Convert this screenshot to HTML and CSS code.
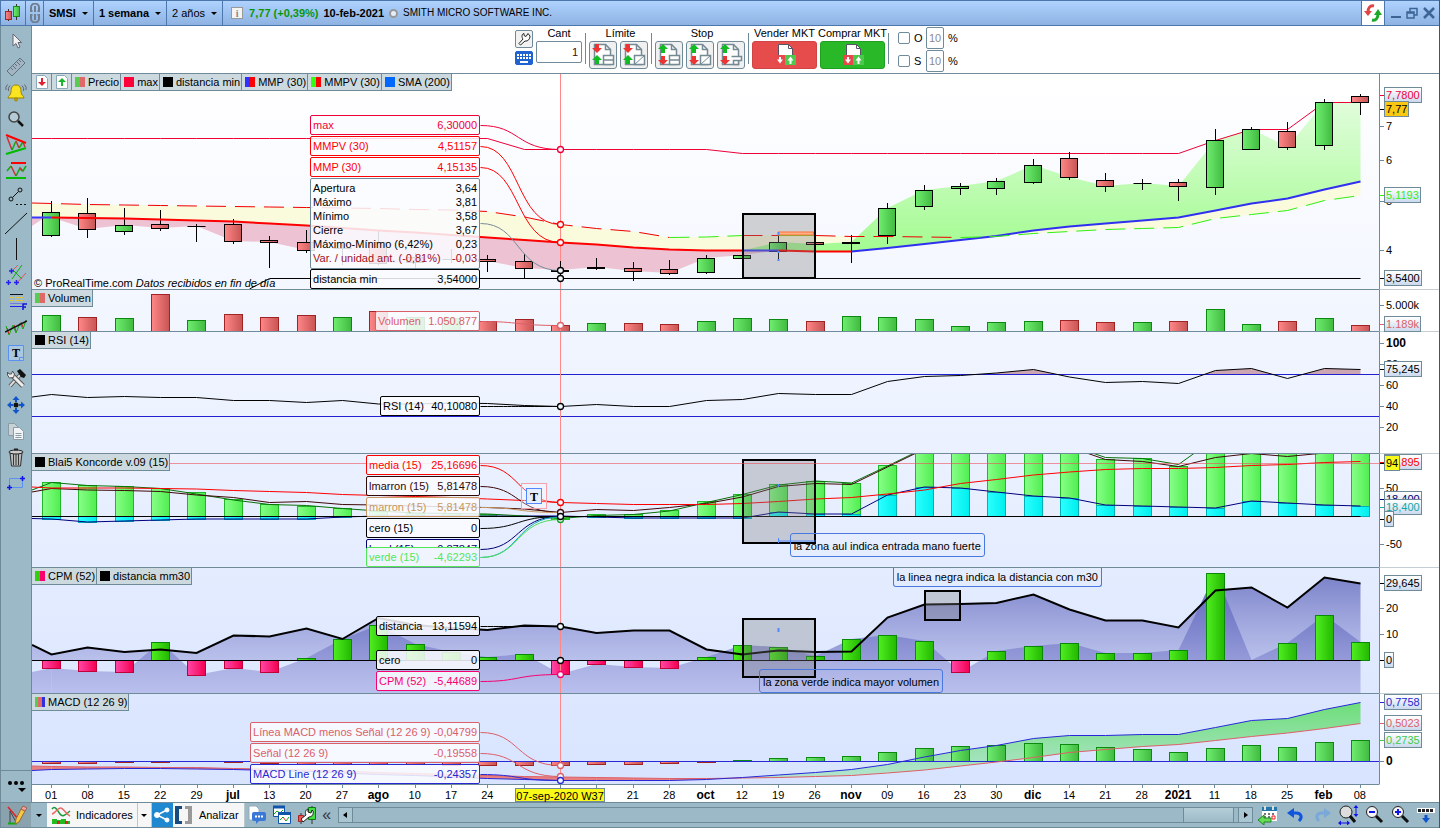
FILE: index.html
```
<!DOCTYPE html>
<html lang="es">

<head>
	<meta charset="utf-8">
	<title>SMSI - SMITH MICRO SOFTWARE INC.</title>
	<meta name="viewport" content="width=device-width,initial-scale=1.0">
	<link rel="stylesheet" href="styles.css">
	<script defer src="chart.js"></script>
</head>

<body>
	<svg class="defs" aria-hidden="true">
		<linearGradient id="up"><stop stop-color="#70ee70"/><stop offset="1" stop-color="#40ba40"/></linearGradient>
		<linearGradient id="down"><stop stop-color="#ff8787"/><stop offset="1" stop-color="#c85454"/></linearGradient>
		<linearGradient id="lime"><stop stop-color="#88ff88"/><stop offset="1" stop-color="#50ee50"/></linearGradient>
		<linearGradient id="cyan"><stop stop-color="#2cffff"/><stop offset="1" stop-color="#00eeee"/></linearGradient>
		<linearGradient id="cpmUp"><stop stop-color="#50ee20"/><stop offset="1" stop-color="#22b800"/></linearGradient>
		<linearGradient id="cpmDown"><stop stop-color="#ff48a8"/><stop offset="1" stop-color="#f40050"/></linearGradient>
		<linearGradient id="bull" gradientUnits="userSpaceOnUse" x1="0" x2="0" y1="20" y2="180"><stop stop-color="#e4fde0"/><stop offset="1" stop-color="#a2fb90"/></linearGradient>
		<linearGradient id="area" gradientUnits="userSpaceOnUse" x1="0" x2="0" y1="0" y2="125"><stop stop-color="#3c42a8" stop-opacity=".85"/><stop offset=".73" stop-color="#6c72c4" stop-opacity=".55"/><stop offset=".74" stop-color="#8084cc" stop-opacity=".58"/><stop offset="1" stop-color="#9498dc" stop-opacity=".5"/></linearGradient>
		<linearGradient id="dist" gradientUnits="userSpaceOnUse" x1="0" x2="0" y1="5" y2="92"><stop stop-color="#6068bc" stop-opacity=".82"/><stop offset="1" stop-color="#8488d0" stop-opacity=".42"/></linearGradient>
		<linearGradient id="macdUp" gradientUnits="userSpaceOnUse" x1="0" x2="0" y1="0" y2="80"><stop stop-color="#66dd70"/><stop offset="1" stop-color="#b0e4cc"/></linearGradient>
		<symbol id="page" viewBox="0 0 24 24"><path d="M3.5 1.5h11l5 5v15h-16z" fill="#fff" stroke="#758a94" stroke-width="1.5"/><path d="M14.5 1.5v5h5" fill="none" stroke="#758a94" stroke-width="1.5"/></symbol>
		<symbol id="limit" viewBox="0 0 24 24"><path d="M6 1v4" stroke="#e33" stroke-width="4"/><path d="M1 5h10l-5 5z" fill="#e33"/><path d="M6 17v4" stroke="#1b2" stroke-width="4"/><path d="M1 17h10l-5-5z" fill="#1b2"/></symbol>
		<symbol id="stop" viewBox="0 0 24 24"><path d="M6 6v4" stroke="#1b2" stroke-width="4"/><path d="M1 6h10L6 1z" fill="#1b2"/><path d="M6 13v4" stroke="#e33" stroke-width="4"/><path d="M1 17h10l-5 5z" fill="#e33"/></symbol>
		<symbol id="deal" viewBox="0 0 24 24"><path d="M5.5 12V1.5h10l4 4V12" fill="#fff" stroke="#556"/><path d="M15.5 1.5v4h4" fill="none" stroke="#556"/><path d="M2 12h10v10H2z" fill="#e8484c"/><path d="M12 12h11v10H12z" fill="#4cc84c"/><path d="M7 14v3M17.500 17v4" stroke="#fff" stroke-width="2"/><path d="M4 16.500h6L7 20.500zM14.500 17.500h6l-3-4z" fill="#fff"/></symbol>
	</svg>

	<header class="titlebar">
		<div class="cell logo"><svg width="18" height="18" viewBox="0 0 18 18"><path d="M4.500 5v12M12.500 0v16" stroke="#333"/><rect x="1.500" y="7.500" width="6" height="8" fill="url(#down)" stroke="#a22"/><rect x="9.500" y="2.500" width="6" height="10" fill="url(#up)" stroke="#1a8a1a"/></svg></div>
		<div class="cell link"><svg width="12" height="20" viewBox="0 0 12 20" fill="none" stroke="#6f7f90" stroke-width="2"><path d="M3.500 8H2V4.500a4 4 0 0 1 8 0V8H8.500M6 3v6M3.500 12H2v3.500a4 4 0 0 0 8 0V12H8.500M6 11v6"/></svg></div>
		<button class="cell pick bold">SMSI</button>
		<button class="cell pick bold">1 semana</button>
		<button class="cell pick">2 años</button>
		<div class="quote">
			<button class="info" aria-label="Información">i</button>
			<b class="change">7,77 (+0,39%)</b>
			<b>10-feb-2021</b>
			<i class="dot"></i>
			<span class="company">SMITH MICRO SOFTWARE INC.</span>
		</div>
		<div class="cell sync"><svg width="18" height="18" viewBox="0 0 18 18" fill="none" stroke-width="3"><path d="M10 2C6 1 4 4 4 8" stroke="#e04545"/><path d="M0 7h8l-4 5z" fill="#e04545"/><path d="M8 16c4 1 6-2 6-6" stroke="#1ea82a"/><path d="M10 11h8l-4-6z" fill="#1ea82a"/></svg></div>
		<div class="window">
			<button aria-label="Minimizar"><svg width="12" height="12" viewBox="0 0 12 12"><path d="M1 10h10" stroke="#3c6596" stroke-width="2"/></svg></button>
			<button aria-label="Restaurar"><svg width="12" height="12" viewBox="0 0 12 12" fill="none" stroke="#3c6596" stroke-width="1.500"><path d="M1 5h7v6H1zM1 6h7M4 5V1.500h7V8H8"/></svg></button>
			<button aria-label="Cerrar"><svg width="12" height="12" viewBox="0 0 12 12"><path d="M1 1l10 10M11 1L1 11" stroke="#3c6596" stroke-width="2.500"/></svg></button>
		</div>
	</header>

	<div class="main">
		<nav class="tools">
			<button aria-label="Cursor"><svg viewBox="0 0 22 22"><path d="M8 4v12l3-2.500 2 4.500 2-1-2-4.500h3.500z" fill="#f2f2f2" stroke="#667"/></svg></button>
			<button aria-label="Regla"><svg viewBox="0 0 22 22"><path d="M2 15L15 2l5 5L7 20z" fill="#a3b4c2" stroke="#5f7280"/><path d="M6 12l2 2M8 10l3 3M10 8l2 2M12 6l3 3M14 4l2 2" stroke="#5f7280"/></svg></button>
			<button aria-label="Alerta"><svg viewBox="0 0 22 22"><path d="M11 3c4 0 5 3 5 7 0 3 3 4 3 6H3c0-2 3-3 3-6 0-4 1-7 5-7z" fill="#fbe320" stroke="#9a8200"/><circle cx="11" cy="17.500" r="1.500" fill="#ca0" stroke="#9a8200"/><path d="M5 3.500Q2.500 6 3.500 9M2.500 2.500Q0 5 1 8M17 3.500Q19.500 6 18.500 9M19.500 2.500Q22 5 21 8" stroke="#667" fill="none"/></svg></button>
			<button aria-label="Lupa"><svg viewBox="0 0 22 22"><circle cx="9" cy="9" r="5" fill="#b4cad4" stroke="#444" stroke-width="1.500"/><path d="M13 13l5 5" stroke="#111" stroke-width="2.500"/></svg></button>
			<button aria-label="Triángulos"><svg viewBox="0 0 22 22" fill="none"><path d="M2 3l5 13M11 7l3 7M18 8l2 5" stroke="#c33" stroke-width="1.500"/><path d="M7 16l4-9M14 14l4-6" stroke="#1a1" stroke-width="1.500"/><path d="M1 1l20 8" stroke="#f00" stroke-width="2"/><path d="M1 20l20-6" stroke="#0b0" stroke-width="2"/></svg></button>
			<button aria-label="Canales"><svg viewBox="0 0 22 22" fill="none"><path d="M2 11l4-5M11 16l4-8 3 3 3-5" stroke="#1a1" stroke-width="1.500"/><path d="M6 6l5 10M15 8l2 3" stroke="#c33" stroke-width="1.500"/><path d="M6 3h15" stroke="#f00" stroke-width="2"/><path d="M1 18h20" stroke="#0b0" stroke-width="2"/></svg></button>
			<button aria-label="Segmento"><svg viewBox="0 0 22 22" fill="none" stroke="#111"><circle cx="15" cy="4" r="2"/><circle cx="6" cy="13" r="2"/><path d="M7.500 11.500l6-6"/><path d="M11 18.500h10" stroke-dasharray="2 2"/></svg></button>
			<button aria-label="Línea"><svg viewBox="0 0 22 22"><path d="M0 22L22 1" stroke="#111"/></svg></button>
			<button aria-label="Vertical"><svg viewBox="0 0 22 22"><path d="M11.500 0v22" stroke="#111"/></svg></button>
			<button aria-label="Paralelas"><svg viewBox="0 0 22 22" fill="none"><path d="M7 7l6-6M11 20L21 9" stroke="#d55"/><path d="M7 15L17 1M8 6l9 9" stroke="#1a1"/><path d="M1 18.500h5M3.500 16v5M9 18.500h5M11.500 16v5M4 7h5M6.500 4.500v5" stroke="#22e" stroke-width="1.500"/></svg></button>
			<button aria-label="Fibonacci"><svg viewBox="0 0 22 22" fill="none"><path d="M5 4.500h13" stroke="#111"/><path d="M5 7.500h13M5 10.500h13" stroke="#e8c530" stroke-dasharray="4 1"/><path d="M5 13.500h12" stroke="#77d"/><path d="M5 16.500h12" stroke="#22e"/><path d="M18 20v-6h4M18 17h3" stroke="#11d" stroke-width="1.500"/></svg></button>
			<button aria-label="Regresión"><svg viewBox="0 0 22 22" fill="none"><path d="M1 10l3 9 4-10 3 8 4-10 3 6 3-9" stroke="#1a1"/><path d="M2 12l2 6M9 9l2 6M16 6l2 5" stroke="#d22"/><path d="M0 16L22 5" stroke="#111" stroke-width="1.500"/></svg></button>
			<button aria-label="Texto"><svg viewBox="0 0 22 22"><path d="M3.500 3.500h15v15h-15z" fill="#a9c8e0" stroke="#5b90f0"/><path d="M14.500 18.500v-3h4" fill="none" stroke="#5b90f0"/><text class="glyph" x="11" y="15">T</text></svg></button>
			<button aria-label="Herramientas"><svg viewBox="0 0 22 22"><path d="M5 18L15 7" stroke="#555" stroke-width="4"/><path d="M5 18L15 7" stroke="#ddd" stroke-width="2"/><path d="M12 3l3-2 6 6-2 3-3-1z" fill="#111"/><path d="M6 6l12 12" stroke="#555" stroke-width="5"/><path d="M6 6l12 12" stroke="#eee" stroke-width="3"/><path d="M2.500 4v3l2 3 4-.5 1-3.500-2-3-1 3H4z" fill="#eee" stroke="#555"/></svg></button>
			<button aria-label="Mover"><svg viewBox="0 0 22 22"><path d="M11 4v4M11 14v4M4 11h4M14 11h4" stroke="#15c" stroke-width="2"/><path d="M11 2l3.500 4h-7zM11 20l3.500-4h-7zM2 11l4-3.500v7zM20 11l-4-3.500v7z" fill="#15c"/><circle cx="11" cy="11" r="2.500" fill="#111"/></svg></button>
			<button aria-label="Copiar"><svg viewBox="0 0 22 22" stroke="#8c9ba4"><path d="M3.500 3.500h6l4 4v8h-10z" fill="#c5d2d8"/><path d="M8.500 7.500h6l4 4v8h-10z" fill="#f2f5f7"/><path d="M10.500 13.500h6M10.500 15.500h6M10.500 17.500h6"/></svg></button>
			<button aria-label="Borrar"><svg viewBox="0 0 22 22"><path d="M5 7h12l-1.500 13h-9z" fill="#bbb" stroke="#333"/><path d="M8.500 8v11M11 8v11M13.500 8v11" stroke="#333"/><ellipse cx="11" cy="6" rx="7" ry="2" fill="#ccc" stroke="#222"/><path d="M9 3.500h4" stroke="#222" stroke-width="2"/></svg></button>
			<button aria-label="Zona"><svg viewBox="0 0 22 22" fill="none"><path d="M4.500 6.500h13v9h-13z" stroke="#5b90f0"/><path d="M15 6.500h5M17.500 4v5M2 15.500h5M4.500 13v5" stroke="#11e" stroke-width="1.500"/></svg></button>
			<button class="more" aria-label="Más"><svg viewBox="0 0 22 22"><circle cx="5" cy="7" r="2"/><circle cx="11" cy="7" r="2"/><circle cx="17" cy="7" r="2"/><path d="M13 12h8l-4 4z"/></svg></button>
		</nav>

		<div class="desk">
			<form class="orders" onsubmit="return false">
				<div class="stack">
					<button class="mini" aria-label="Ajustes"><svg width="16" height="16" viewBox="0 0 16 16"><path d="M12 2.500l-2 3-2-1v-2C5.500 3 5.500 6 7 8l-4 4.500 1.500 1.500L9 10c3 .5 5-2 5-5z" fill="#fff" stroke="#222"/></svg></button>
					<button class="mini keys" aria-label="Teclado"><svg width="16" height="12" viewBox="0 0 16 12" stroke="#fff" stroke-width="2"><path d="M1 3h14M1 6h14" stroke-dasharray="2 1"/><path d="M4 10h8"/></svg></button>
				</div>
				<div class="field"><label for="qty">Cant</label><input id="qty" class="qty" value="1"></div>
				<fieldset class="group">
					<legend>Límite</legend>
					<button class="order" aria-label="Límite fijo"><svg viewBox="0 0 24 24"><use href="#page"/><use href="#limit"/><path d="M12.500 12.500h10v9h-10zM12 17h11" fill="#fff" stroke="#758a94" stroke-width="1.500"/></svg></button>
					<button class="order" aria-label="Límite oblicuo"><svg viewBox="0 0 24 24"><use href="#page"/><use href="#limit"/><path d="M12.500 12.500h10v9h-10z" fill="#fff" stroke="#758a94" stroke-width="1.500"/><path d="M12.500 21.500l10-9" stroke="#758a94"/></svg></button>
				</fieldset>
				<fieldset class="group">
					<legend>Stop</legend>
					<button class="order" aria-label="Stop fijo"><svg viewBox="0 0 24 24"><use href="#page"/><use href="#stop"/><path d="M12.500 12.500h10v9h-10zM12 17h11" fill="#fff" stroke="#758a94" stroke-width="1.500"/></svg></button>
					<button class="order" aria-label="Stop oblicuo"><svg viewBox="0 0 24 24"><use href="#page"/><use href="#stop"/><path d="M12.500 12.500h10v9h-10z" fill="#fff" stroke="#758a94" stroke-width="1.500"/><path d="M12.500 21.500l10-9" stroke="#758a94"/></svg></button>
					<button class="order" aria-label="Stop dinámico"><svg viewBox="0 0 24 24"><use href="#page"/><use href="#stop"/><path d="M12.500 13.500h10v4h-3v4h-5v-4h5" fill="#fff" stroke="#758a94" stroke-width="1.500"/></svg></button>
				</fieldset>
				<div class="deals">
					<div class="field"><label for="sell">Vender MKT</label><button id="sell" class="deal sell"><svg width="24" height="24"><use href="#deal"/></svg></button></div>
					<div class="field"><label for="buy">Comprar MKT</label><button id="buy" class="deal buy"><svg width="24" height="24"><use href="#deal"/></svg></button></div>
				</div>
				<div class="limits">
					<div><input type="checkbox" id="obj"><label for="obj">O</label><input class="pct" value="10" aria-label="Objetivo"><span>%</span></div>
					<div><input type="checkbox" id="stp"><label for="stp">S</label><input class="pct" value="10" aria-label="Stop"><span>%</span></div>
				</div>
			</form>

			<div class="panes">
				<section class="pane price">
					<div class="plot">
						<p class="credit">© ProRealTime.com <i>Datos recibidos en fin de día</i></p>
						<svg id="price"></svg>
						<ul class="legend">
							<li class="arrow"><svg width="14" height="14" viewBox="0 0 14 14"><path d="M1.500.5h8l3 3v10h-11z" fill="#fff" stroke="#8aaabb"/><path d="M6 3h2v4h3l-4 4-4-4h3z" fill="#e02030"/></svg></li>
							<li class="arrow"><svg width="14" height="14" viewBox="0 0 14 14"><path d="M1.500.5h8l3 3v10h-11z" fill="#fff" stroke="#8aaabb"/><path d="M6 11h2V7h3L7 3 3 7h3z" fill="#1ab52a"/></svg></li>
							<li><i class="key gr"></i>Precio</li>
							<li><i class="key crimson"></i>max</li>
							<li><i class="key black"></i>distancia min</li>
							<li><i class="key br"></i>MMP (30)</li>
							<li><i class="key lr"></i>MMPV (30)</li>
							<li><i class="key azure"></i>SMA (200)</li>
						</ul>
						<dl class="tip w170 c-crimson" style="--y:41"><dt>max</dt><dd>6,30000</dd></dl>
						<dl class="tip w170 c-red" style="--y:62"><dt>MMPV (30)</dt><dd>4,51157</dd></dl>
						<dl class="tip w170 c-red" style="--y:83"><dt>MMP (30)</dt><dd>4,15135</dd></dl>
						<dl class="tip w170 ohlc" style="--y:104">
							<dt>Apertura</dt><dd>3,64</dd>
							<dt>Máximo</dt><dd>3,81</dd>
							<dt>Mínimo</dt><dd>3,58</dd>
							<dt>Cierre</dt><dd>3,67</dd>
							<dt>Máximo-Mínimo (6,42%)</dt><dd>0,23</dd>
							<dt class="loss">Var. / unidad ant. (-0,81%)</dt><dd class="loss">-0,03</dd>
						</dl>
						<dl class="tip w170" style="--y:195"><dt>distancia min</dt><dd>3,54000</dd></dl>
					</div>
					<div class="axis">
						<span style="--y:52">7</span><span style="--y:86">6</span><span style="--y:127">5</span><span style="--y:176">4</span>
						<span class="tag c-crimson" style="--y:21">7,7800</span>
						<span class="tag gold" style="--y:35">7,77</span>
						<span class="tag c-lime" style="--y:121">5,1193</span>
						<span class="tag" style="--y:204">3,5400</span>
					</div>
				</section>

				<section class="pane volume">
					<div class="plot">
						<svg id="volume"></svg>
						<ul class="legend"><li><i class="key gr"></i>Volumen</li></ul>
						<dl class="tip w105 c-rose" style="--y:21"><dt>Volumen</dt><dd>1.050.877</dd></dl>
					</div>
					<div class="axis"><span style="--y:15">5.000k</span><span class="tag c-rose" style="--y:34">1.189k</span></div>
				</section>

				<section class="pane rsi">
					<div class="plot">
						<svg id="rsi"></svg>
						<ul class="legend"><li><i class="key black"></i>RSI (14)</li></ul>
						<dl class="tip w100" style="--y:64"><dt>RSI (14)</dt><dd>40,10080</dd></dl>
					</div>
					<div class="axis">
						<span class="big" style="--y:11">100</span><span style="--y:32">80</span><span style="--y:53">60</span><span style="--y:74">40</span><span style="--y:95">20</span>
						<span class="tag" style="--y:37">75,245</span>
					</div>
				</section>

				<section class="pane koncorde">
					<div class="plot">
						<svg id="koncorde"></svg>
						<ul class="legend"><li><i class="key black"></i>Blai5 Koncorde v.09 (15)</li></ul>
						<dl class="tip w114 c-red" style="--y:1"><dt>media (15)</dt><dd>25,16696</dd></dl>
						<dl class="tip w114 c-brown" style="--y:22"><dt>lmarron (15)</dt><dd>5,81478</dd></dl>
						<dl class="tip w114 c-tan" style="--y:43"><dt>marron (15)</dt><dd>5,81478</dd></dl>
						<dl class="tip w114" style="--y:64"><dt>cero (15)</dt><dd>0</dd></dl>
						<dl class="tip w114 c-navy" style="--y:85"><dt>lazul (15)</dt><dd>-0,87847</dd></dl>
						<dl class="tip w114 c-green solid" style="--y:93"><dt>verde (15)</dt><dd>-4,62293</dd></dl>
						<p class="note" style="--i:20.315;--y:79">la zona aul indica entrada mano fuerte</p>
					</div>
					<div class="axis">
						<span style="--y:34">50</span><span style="--y:90">-50</span>
						<span class="tag c-red" style="--y:8">94,895</span>
						<span class="tag yellow" style="--y:9">94</span>
						<span class="tag c-navy" style="--y:45">18,400</span>
						<span class="tag c-teal" style="--y:53">18,400</span>
						<span class="tag" style="--y:65">0</span>
					</div>
				</section>

				<section class="pane cpm">
					<div class="plot">
						<svg id="cpm"></svg>
						<ul class="legend"><li><i class="key gp"></i>CPM (52)</li><li><i class="key black"></i>distancia mm30</li></ul>
						<dl class="tip w104" style="--y:48"><dt>distancia</dt><dd>13,11594</dd></dl>
						<dl class="tip w104" style="--y:82"><dt>cero</dt><dd>0</dd></dl>
						<dl class="tip w104 c-pink" style="--y:103"><dt>CPM (52)</dt><dd>-5,44689</dd></dl>
						<p class="note top" style="--i:23.15;--y:0">la linea negra indica la distancia con m30</p>
						<p class="note" style="--i:19.47;--y:101">la zona verde indica mayor volumen</p>
					</div>
					<div class="axis">
						<span style="--y:40">20</span><span style="--y:66">10</span>
						<span class="tag" style="--y:15">29,645</span>
						<span class="tag" style="--y:92">0</span>
					</div>
				</section>

				<section class="pane macd">
					<div class="plot">
						<svg id="macd"></svg>
						<ul class="legend"><li><i class="key grb"></i>MACD (12 26 9)</li></ul>
						<dl class="tip w230 c-rose" style="--y:28"><dt>Línea MACD menos Señal (12 26 9)</dt><dd>-0,04799</dd></dl>
						<dl class="tip w230 c-rose" style="--y:49"><dt>Señal (12 26 9)</dt><dd>-0,19558</dd></dl>
						<dl class="tip w230 c-blue" style="--y:70"><dt>MACD Line (12 26 9)</dt><dd>-0,24357</dd></dl>
					</div>
					<div class="axis">
						<span class="big" style="--y:67">0</span>
						<span class="tag c-blue" style="--y:8">0,7758</span>
						<span class="tag c-rose" style="--y:29">0,5023</span>
						<span class="tag c-mint" style="--y:46">0,2735</span>
					</div>
				</section>
			</div>

			<div class="dates">
				<ol>
					<li>01</li><li>08</li><li>15</li><li>22</li><li>29</li><li><b>jul</b></li><li>13</li><li>20</li><li>27</li>
					<li><b>ago</b></li><li>10</li><li>17</li><li>24</li><li></li><li><time>07-sep-2020 W37</time></li><li></li><li>21</li><li>28</li>
					<li><b>oct</b></li><li>12</li><li>19</li><li>26</li><li><b>nov</b></li><li>09</li><li>16</li><li>23</li><li>30</li>
					<li><b>dic</b></li><li>14</li><li>21</li><li>28</li><li><b>2021</b></li><li>11</li><li>18</li><li>25</li><li><b>feb</b></li><li>08</li>
				</ol>
			</div>
		</div>
	</div>

	<footer class="bottombar">
		<button class="draw" aria-label="Dibujar"><svg width="22" height="22" viewBox="0 0 22 22" fill="none"><path d="M5 19V7l6 11 5-9" stroke="#444"/><path d="M3 3l11 13" stroke="#d22" stroke-width="1.500"/><path d="M3 19.500h9" stroke="#1a1" stroke-width="2"/><path d="M11 15l5-10 4 2-6 11-4 2z" fill="#f6c840" stroke="#964"/><path d="M16 5l2-3 4 2-2 3z" fill="#f6a0a0" stroke="#964"/></svg></button>
		<button class="drop" aria-label="Más herramientas"></button>
		<button class="white ind"><svg width="20" height="20" viewBox="0 0 20 20" fill="none"><path d="M1 4c3-4 5 1 8 5s6 0 10-3" stroke="#1a9a3a" stroke-width="1.500"/><path d="M1 9c4-1 6-7 9-6s5 6 9 8" stroke="#e66" stroke-width="1.500"/><path d="M1 19v-5h5v1h4v-1h5v2h4v3z" fill="#2b2"/><path d="M6 16h3v3H6zM14 16h3v3h-3z" fill="#d22"/></svg>Indicadores</button>
		<button class="white drop" aria-label="Lista de indicadores"></button>
		<button class="share" aria-label="Compartir"><svg width="16" height="16" viewBox="0 0 16 16" fill="#fff" stroke="#fff"><path d="M13 3L3 8l10 5" fill="none" stroke-width="1.500"/><circle cx="13" cy="3" r="2"/><circle cx="3" cy="8" r="2.500"/><circle cx="13" cy="13" r="2"/></svg></button>
		<button class="white analyze"><svg width="20" height="18" viewBox="0 0 20 18"><path d="M8 0H1v18h7v-3H5V3h3z" fill="#174c80"/><path d="M11 0h7v18h-7v-3h3V3h-3z" fill="#999"/></svg>Analizar</button>
		<button class="icon" aria-label="Mensajes"><svg viewBox="0 0 20 20"><path d="M2 1h7l3 3v11H2z" fill="#fff" stroke="#9ab"/><rect x="5" y="7" width="14" height="9" rx="2" fill="#3a78d8"/><path d="M9 15v4l4-4z" fill="#3a78d8"/><path d="M8 11.500h8" stroke="#fff" stroke-width="2" stroke-dasharray="2 1"/></svg></button>
		<button class="icon" aria-label="Ventanas"><svg viewBox="0 0 20 20"><path d="M1.500 1.500h11v10h-11z" fill="#fff" stroke="#15a"/><path d="M1 2h12" stroke="#15a" stroke-width="3"/><path d="M2 9l3-3 3 2 3-3" stroke="#1a1" fill="none"/><path d="M6.500 7.500h12v11h-12z" fill="#fff" stroke="#15a"/><path d="M6 8.500h13" stroke="#15a" stroke-width="3"/><path d="M8 15l3-3" stroke="#1a1" fill="none"/><path d="M11 12l3 4" stroke="#d22"/><path d="M14 16l3-4" stroke="#1a1"/></svg></button>
		<button class="icon" aria-label="Configurar gráfico"><svg viewBox="0 0 20 20"><path d="M4 8v11M15 1v18" stroke="#333"/><path d="M1.500 10.500h5v6h-5z" fill="#e55" stroke="#a22"/><path d="M11.500 2.500h7v12h-7z" fill="#4d4" stroke="#171"/><path d="M15 5l-1 3-3-1V4c-3 1-3 4-2 6l-5 4 2 3 6-5c3 0 5-3 4-6z" fill="#fff" stroke="#222"/></svg></button>
		<span class="chevrons">«</span>
		<div class="scroll"><button class="prev" aria-label="Anterior"></button><div class="track"><div class="thumb"></div></div><button class="next" aria-label="Siguiente"></button></div>
		<button class="icon cal" aria-label="Calendario"><svg viewBox="0 0 20 20"><path d="M4 4h15v12H4z" fill="#fff"/><path d="M4 4h15" stroke="#27a" stroke-width="4"/><path d="M6 9h12M6 12h12" stroke="#777" stroke-dasharray="2 2" stroke-width="2"/><path d="M14 11h3v3h-3z" fill="#fff" stroke="#e22"/><path d="M7 1v4M15 1v4" stroke="#ddd" stroke-width="2"/><path d="M6 10v3h7v4H6v3l-6-5z" fill="#6d5" stroke="#282"/></svg></button>
		<button class="icon" aria-label="Deshacer"><svg viewBox="0 0 20 20"><path d="M5 8h5c5 0 7 4 3 8" fill="none" stroke="#15d" stroke-width="3"/><path d="M1 8l7-5v10z" fill="#15d"/></svg></button>
		<button class="icon" aria-label="Rehacer"><svg viewBox="0 0 20 20"><path d="M15 8h-5c-5 0-7 4-3 8" fill="none" stroke="#7aa8d8" stroke-width="3"/><path d="M19 8l-7-5v10z" fill="#7aa8d8"/></svg></button>
		<button class="icon" aria-label="Ajustar zoom"><svg viewBox="0 0 20 20"><circle cx="8" cy="7" r="6" fill="#ddd" stroke="#222"/><path d="M12 11l5 6" stroke="#111" stroke-width="3"/><path d="M18 2v9M2 18h9" stroke="#11e"/><path d="M18 0l2.500 3h-5zM18 12l2.500-3h-5zM0 18l3-2.500v5zM12 18l-3-2.500v5z" fill="#11e"/></svg></button>
		<button class="icon" aria-label="Alejar"><svg viewBox="0 0 20 20"><circle cx="8" cy="7" r="5.500" fill="#f4f4f4" stroke="#222"/><path d="M12 11l6 6" stroke="#111" stroke-width="3"/><path d="M5 7h6" stroke="#11e" stroke-width="2"/></svg></button>
		<button class="icon" aria-label="Acercar"><svg viewBox="0 0 20 20"><circle cx="8" cy="7" r="5.500" fill="#f4f4f4" stroke="#222"/><path d="M12 11l6 6" stroke="#111" stroke-width="3"/><path d="M5 7h6M8 4v6" stroke="#11e" stroke-width="2"/></svg></button>
		<button class="icon" aria-label="Ocultar barra"><svg viewBox="0 0 20 20"><path d="M1 3h18v5H1z" fill="#fff"/><path d="M2 5.500h16" stroke="#222" stroke-width="3" stroke-dasharray="3 1"/><path d="M10 10v4" stroke="#15c" stroke-width="3"/><path d="M6 13h8l-4 5z" fill="#15c"/></svg></button>
	</footer>
</body>

</html>
```
FILE: styles.css
```
* {
	box-sizing: border-box;
}
body {
	margin: 0;
	height: 100vh;
	min-height: 640px;
	display: flex;
	flex-direction: column;
	font: 11px/14px "Liberation Sans", Arial, sans-serif;
	color: #000;
	background: #9bb9c6;
	border-right: 1px solid #3f5868;
	overflow: hidden;
}
button, input {
	font: inherit;
	color: inherit;
	margin: 0;
	padding: 0;
	border: 0;
	background: none;
}
button {
	display: flex;
	align-items: center;
	justify-content: center;
}
ul, ol, dl, dd, p, fieldset {
	margin: 0;
	padding: 0;
	list-style: none;
	border: 0;
}
.defs {
	position: absolute;
	width: 0;
	height: 0;
}
svg {
	flex: none;
}
.bold {
	font-weight: bold;
}

/* title bar */
.titlebar {
	flex: 0 0 26px;
	display: flex;
	background: linear-gradient(#afd2ff, #8eb3e2);
	border: solid #4c77ad;
	border-width: 1px 0 1px 1px;
}
.cell {
	display: flex;
	align-items: center;
	justify-content: center;
	border-right: 1px solid #4c77ad;
}
.logo {
	width: 25px;
}
.link {
	width: 18px;
}
.pick {
	padding: 0 5px;
	gap: 6px;
}
.pick::after, .drop::after {
	content: "";
	border: solid transparent;
	border-width: 3px 3px 0;
	border-top-color: #000;
}
.quote {
	flex: 1;
	display: flex;
	align-items: center;
	gap: 5px;
	padding-left: 8px;
}
.info {
	width: 12px;
	height: 12px;
	margin-right: 1px;
	color: #888;
	background: #f4f4f4;
	border: 1px solid #999;
	font: bold 10px "Liberation Serif", serif;
}
.change {
	color: #0a960a;
}
.dot {
	width: 9px;
	height: 9px;
	border: 2px solid #999;
	border-radius: 50%;
	background: #e8eef8;
}
.company {
	font-size: 10px;
}
.sync {
	width: 24px;
	background: #fff;
	border-left: 1px solid #4c77ad;
}
.window {
	width: 54px;
	display: flex;
	align-items: center;
	justify-content: space-evenly;
}

/* left tool strip */
.main {
	flex: 1;
	display: flex;
	min-height: 0;
}
.tools {
	flex: 0 0 32px;
	display: flex;
	flex-direction: column;
	padding-top: 2px;
	border: solid #6f8a98;
	border-width: 0 1px 0 1px;
	overflow: hidden;
}
.tools button {
	flex: 0 0 26px;
}
.tools svg {
	width: 22px;
	height: 22px;
}
.tools .more {
	flex-basis: 32px;
	margin-top: auto;
	border-top: 1px solid #6f8a98;
}
.glyph {
	font: bold 12px "Liberation Serif", serif;
	text-anchor: middle;
}
.desk {
	flex: 1;
	min-width: 0;
	display: flex;
	flex-direction: column;
	background: #fff;
}

/* order entry */
.orders {
	flex: 0 0 48px;
	display: flex;
	justify-content: center;
	gap: 3px;
	border-bottom: 1px solid #6f8a98;
}
.stack {
	display: flex;
	flex-direction: column;
	gap: 3px;
	padding-top: 4px;
}
.mini {
	width: 18px;
	height: 18px;
	border: 1px solid #6f8a98;
	border-radius: 2px;
	background: #f2f2f2;
}
.keys {
	height: 14px;
	background: #1f62d0;
	border-color: #1f62d0;
}
.field {
	display: flex;
	flex-direction: column;
	align-items: center;
	gap: 1px;
	white-space: nowrap;
}
.qty {
	width: 46px;
	height: 22px;
	padding: 0 3px;
	text-align: right;
	border: 1px solid #6f8a98;
	border-radius: 2px;
	color: #301020;
}
.group, .deals {
	display: flex;
	gap: 3px;
	position: relative;
	padding: 15px 0 0 4px;
	min-width: 0;
}
.group legend {
	position: absolute;
	top: 0;
	left: 4px;
	width: 100%;
	padding: 0;
	text-align: center;
}
.deals {
	padding-top: 0;
}
.group::before, .deals::before, .limits::before {
	content: "";
	position: absolute;
	left: 0;
	top: 7px;
	height: 31px;
	border-left: 1px solid #6f8a98;
}
.order {
	width: 28px;
	height: 28px;
	border: 1px solid #6f8a98;
	border-radius: 3px;
	background: #f0f0f0;
}
.order svg {
	width: 24px;
	height: 24px;
}
.deals .field {
	width: 65px;
}
.deal {
	width: 65px;
	height: 28px;
	border-radius: 3px;
}
.sell {
	background: #e64c4c;
	border: 1px solid #d04444;
}
.buy {
	background: #28b828;
	border: 1px solid #20a020;
}
.limits {
	position: relative;
	display: flex;
	flex-direction: column;
	gap: 1px;
	padding: 1px 0 0 10px;
}
.limits div {
	display: flex;
	align-items: center;
	gap: 4px;
}
.limits input[type=checkbox] {
	appearance: none;
	width: 12px;
	height: 12px;
	border: 1px solid #6f8a98;
	border-radius: 2px;
}
.limits label {
	width: 8px;
}
.limits span {
	width: 8px;
}
.pct {
	width: 18px;
	height: 22px;
	text-align: center;
	color: #8a8a8a;
	border: 1px solid #6f8a98;
	border-radius: 2px;
}

/* chart panes */
.panes {
	flex: 1;
	min-height: 0;
	display: grid;
	grid-template-rows: 216fr 42fr 122fr 114fr 126fr 91fr;
	background: linear-gradient(#fff, #d8e4ff);
}
.pane {
	display: flex;
	min-height: 0;
}
/* pane height without its bottom rule */
.price { --h: 215; }
.volume { --h: 41; }
.rsi { --h: 121; }
.koncorde { --h: 113; }
.cpm { --h: 125; }
.macd { --h: 90; }
.plot {
	flex: 1;
	position: relative;
	border-bottom: 1px solid #6f8a98;
}
.plot > svg {
	position: absolute;
	width: 100%;
	height: 100%;
}
.axis {
	flex: 0 0 60px;
	position: relative;
	background: #fff;
	border-left: 1px solid #6f8a98;
	border-bottom: 1px solid #c4ced4;
}
.macd .axis {
	border-bottom-color: #fff;
}
.axis span {
	position: absolute;
	left: 4px;
	top: calc(var(--y) / var(--h) * 100%);
	transform: translateY(-50%);
	padding-left: 2px;
	line-height: 16px;
}
.axis span::before {
	content: "";
	position: absolute;
	left: -4px;
	top: 8px;
	width: 4px;
	border-top: 1px solid #6f8a98;
}
.axis .big {
	font-size: 12px;
	font-weight: bold;
}
.axis .tag {
	padding: 0 1px;
	line-height: 14px;
	border: 1px solid #6f8a98;
	background: linear-gradient(#fff, #ccd9ee);
}
.axis .tag::before {
	left: -5px;
	top: 7px;
	border-color: currentColor;
}
.axis .gold {
	background: #fac812;
}
.axis .yellow {
	background: #fafa18;
}
.legend {
	position: absolute;
	left: 0;
	top: 0;
	display: flex;
}
.legend li {
	display: flex;
	align-items: center;
	gap: 3px;
	height: 17px;
	padding: 0 1px 0 3px;
	border: solid #6f8a98;
	border-width: 0 1px 1px 0;
	background: #ccdae0;
	white-space: nowrap;
}
.legend .arrow {
	padding: 0 2px 0 3px;
}
.key {
	width: 10px;
	height: 10px;
}
.gr { background: linear-gradient(90deg, #58cc50 50%, #e06868 50%); }
.br { background: linear-gradient(90deg, #3030ff 50%, #f00 50%); }
.lr { background: linear-gradient(90deg, #30ff10 50%, #f00 50%); }
.gp { background: linear-gradient(90deg, #30d010 50%, #ff0070 50%); }
.grb { background: linear-gradient(90deg, #58cc50 33%, #e06868 33% 66%, #3030e0 66%); }
.crimson { background: #ff0038; }
.black { background: #000; }
.azure { background: #0068ff; }

.tip {
	position: absolute;
	top: calc(var(--y) / var(--h) * 100%);
	/* box ends 80px before the cursor bar, which is bar 14 of 36 */
	right: calc((100% - 38px) * 22 / 36 + 99px);
	display: grid;
	grid-template-columns: auto auto;
	justify-content: space-between;
	min-height: 20px;
	padding: 2px;
	border: 1px solid;
	border-radius: 2px;
	background: rgba(250, 251, 255, .86);
	white-space: nowrap;
}
.tip dd {
	text-align: right;
}
.tip.ohlc {
	padding-bottom: 3px;
	border-color: #6f8a98;
}
.tip.solid {
	background: #f0f4ff;
}
.w230 { width: 230px; }
.w170 { width: 170px; }
.w114 { width: 114px; }
.w105 { width: 105px; }
.w104 { width: 104px; }
.w100 { width: 100px; }
.loss { color: #a01020; }
.c-crimson { color: #f00038; }
.c-red { color: #f00; }
.c-rose { color: #dc6068; }
.c-brown { color: #300808; }
.c-tan { color: #c89860; }
.c-navy { color: #000070; }
.c-green { color: #50e858; }
.c-lime { color: #30f010; }
.c-mint { color: #40cc48; }
.c-teal { color: #10a8a8; }
.c-pink { color: #f80070; }
.c-blue { color: #2828d0; }
.note {
	position: absolute;
	left: calc(19px + (100% - 38px) * var(--i) / 36);
	top: calc(var(--y) / var(--h) * 100%);
	height: 24px;
	padding: 5px 3px;
	line-height: 14px;
	white-space: nowrap;
	border: 1px solid #4878e0;
	border-radius: 3px;
}
.note.top {
	height: 19px;
	padding-top: 2px;
	border-top: 0;
	border-radius: 0 0 3px 3px;
}
.credit {
	position: absolute;
	left: 2px;
	bottom: -1px;
	white-space: nowrap;
}

/* date axis */
.dates {
	flex: 0 0 17px;
	padding-right: 60px;
}
.dates ol {
	display: grid;
	grid-template-columns: repeat(37, minmax(0, 1fr));
	padding: 0 1px;
}
.dates li {
	position: relative;
	display: flex;
	justify-content: center;
	height: 17px;
	padding-top: 3px;
	line-height: 14px;
	white-space: nowrap;
}
.dates li::before {
	content: "";
	position: absolute;
	top: 0;
	left: 50%;
	height: 3px;
	border-left: 1px solid #6f8a98;
}
.dates b {
	font-size: 12px;
}
.dates time {
	z-index: 1;
	border: 1px solid #6f8a98;
	background: #fafa18;
}

/* bottom bar */
.bottombar {
	flex: 0 0 26px;
	display: flex;
	align-items: center;
	border: solid #6f8a98;
	border-width: 1px 0 1px 1px;
}
.bottombar > button {
	height: 24px;
}
.draw {
	width: 30px;
	background: #8aa2ae;
}
.drop {
	width: 16px;
}
.white {
	background: #f6f6f6;
	border-right: 1px solid #bcc8ce;
}
.ind, .analyze {
	gap: 5px;
	padding: 0 4px;
}
.white.drop {
	width: 14px;
}
.share {
	width: 21px;
	background: #2088d0;
}
.analyze {
	padding: 0 5px 0 1px;
}
.icon {
	width: 26px;
}
.analyze ~ .icon {
	width: 25px;
}
.scroll ~ .icon {
	width: 26px;
}
.scroll ~ .cal {
	width: 30px;
}
.icon svg {
	width: 20px;
	height: 20px;
}
.chevrons {
	width: 14px;
	text-align: center;
	font-size: 16px;
	color: #334;
}
.scroll {
	flex: 1;
	display: flex;
	height: 16px;
	margin-left: 4px;
	border: 1px solid #6f8a98;
}
.scroll button {
	width: 14px;
	background: #a9c6d2;
	border-right: 1px solid #6f8a98;
}
.scroll .next {
	border: 0;
	border-left: 1px solid #6f8a98;
}
.prev::after, .next::after {
	content: "";
	border: solid transparent;
	border-width: 3px 4px 3px 0;
	border-right-color: #000;
}
.next::after {
	border-width: 3px 0 3px 4px;
	border-left-color: #000;
}
.track {
	flex: 1;
	display: flex;
	justify-content: flex-end;
	padding-right: 4px;
}
.thumb {
	width: 51px;
	background: linear-gradient(#b4ced8, #9cbac8);
	border: solid #6f8a98;
	border-width: 0 1px;
}
```
FILE: chart.js
```
// Heights are measured down the whole chart stack, one entry per weekly bar.
// top = where the pane starts in the stack, h = its height
const PANES = {
	price:    { top: 74,  h: 216 },
	volume:   { top: 290, h: 42 },
	rsi:      { top: 332, h: 122 },
	koncorde: { top: 454, h: 114 },
	cpm:      { top: 568, h: 126 },
	macd:     { top: 694, h: 91 }
}
const BARS = 36
const CURSOR = 14

// high, body top, body bottom, low, direction
const candles = [
	[201,212,235,237,1],[198,213,229,238,0],[208,225,231,235,1],[210,224,228,231,0],[224,226,226,242,1],
	[219,224,241,244,0],[236,240,242,268,0],[230,242,250,253,0],[243,248,248,265,1],[231,242,263,265,0],
	[253,257,262,270,0],[249,259,259,263,1],[255,259,261,272,0],[254,261,268,278,0],[261,270,271,275,1],
	[258,267,268,270,1],[262,268,271,281,0],[260,269,273,275,0],[255,258,272,274,1],[252,255,258,260,1],
	[234,242,251,261,1],[241,242,244,246,0],[235,242,243,263,1],[203,208,235,244,1],[185,190,206,210,1],
	[183,186,188,195,1],[178,181,188,195,1],[159,165,182,184,1],[152,158,177,180,0],[173,180,186,192,0],
	[179,183,183,190,1],[179,182,186,201,0],[129,140,187,195,1],[127,129,149,150,1],[122,131,147,150,0],
	[99,102,145,150,1],[94,96,102,115,0]
]
const mmp = [217.5,218,218.5,219.5,220.5,221.5,223.5,225.5,228,230.5,232.5,235,237.5,240,242.5,244.5,247.5,249.5,250.5,250.5,250.5,251.5,251.5,248,244,240,236,230.5,226.5,223.5,220.5,217.5,210.5,203.5,198.5,189.5,181.5]
const mmpv = [203.5,204.5,205,205.5,206,206.5,207,207.5,208,208.5,209.5,210,211.5,217,224.5,228.5,231.5,237.5,237,235.5,235.5,235.5,236.5,236.5,237,237.5,236.5,233.5,231.5,229.5,228.5,227.5,218.5,214.5,210.5,200.5,195.5]
const maxLine = [138.5,138.5,138.5,138.5,138.5,138.5,138.5,138.5,138.5,138.5,138.5,138.5,138.5,149.5,149.5,149.5,149.5,149.5,149.5,153.5,153.5,153.5,153.5,153.5,153.5,153.5,153.5,153.5,153.5,153.5,153.5,153.5,140.5,129.5,129.5,102.5,102.5]
const volumes = [315,-317,318,-294,320,-314,-317,-315,317,-311,317,318,-321,-319,-325,323,-323,-324,321,318,319,-321,316,317,319,326,322,321,-320,-322,322,-321,309,324,-321,318,-325]
const rsiLine = [394.5,397.5,396.5,397.5,397.5,400.5,400.5,402.5,400.5,404,404,403,403.5,405.5,406.5,404.5,406.5,406.5,400.5,399.5,393.5,394.5,394.5,381.5,376.5,375.5,373,369.5,377,382.5,381.5,383.5,370.5,368.5,378.5,368.5,369.5]
const verde = [482,485,486,488,492,499,504,506,508,511,513,513,514,516,519,514,514,510,501,494,484,481,483,465,440,440,440,440,440,459,458,466,440,440,440,440,440]
const verdeLine = [482.5,485.5,486.5,488.5,494,500,504.5,505.5,508.5,511,513,513.5,514,516,518.5,515.5,514.5,511,502.5,494.5,485,481,483,466,448,440,440,440,445,457.5,458.5,464.5,438,430,430,430,430]
const azul = [519,522,521,520,519,519,519,519,517,516,516,516,516,516,516,517,518,518,518,518,512,514,514,495,487,488,492,496,498,505,506,507,508,501,503,505,506]
const marron = [488.5,490,490.5,491.5,495,497.5,502.5,501.5,504.5,505,506,507,507.5,509,512.5,509.5,510.5,507.5,503.5,497,486.5,483.5,484.5,467,449,441,441,441,447,459.5,461.5,466.5,457.5,453.5,456.5,453,450]
const media = [488,488,488,488.5,489,490.5,491.5,492.5,494.5,495.5,496.5,497.5,499,500.5,502.5,503.5,504.5,504.5,504.5,503.5,501.5,499,497.5,494,490,483.5,479.5,475,472,469.5,468.5,468.5,467.5,465.5,464.5,462.5,461.5]
const cpm = [668,671,672,642,675,668,672,658,639,625,644,652,657,654,674,664,667,668,657,645,647,656,639,635,641,672,651,646,643,653,653,650,573,660,643,615,642]
const distance = [654.5,647.5,652,649.5,653,635.5,636.5,628.5,639,618,625,628,630,625.5,626.5,633,630.5,630.5,649.5,654.5,650.5,652,651.5,617.5,604.5,604,603,594.5,609.5,620.5,620.5,627.5,590.5,587.5,607.5,577.5,583.5]
const hist = [763,763,762,762,761,762,763,764,764,764,764,765,765,765,765,764,764,763,762,760,758,757,756,752,748,746,745,743,744,747,749,752,748,745,747,742,740]
const macdLine = [769.5,769,768.5,768.5,769,769.5,770.5,771.5,773,774.5,775.5,777,778.5,779.5,780.5,780.5,780.5,780.5,779.5,777.5,775,772.5,769.5,764.5,757,750.5,745.5,738.5,735.5,735.5,734.5,734.5,727.5,720.5,718.5,709.5,702.5]
const signal = [766.5,767,767,767.5,767.5,768.5,769,770,771,772.5,773.5,774.5,775.5,776.5,777,777.5,778,778.5,778.5,778,777.5,776.5,775.5,773,770,766,762,757.5,752.5,749.5,746.5,744.5,740.5,736.5,733,728.5,723.5]

function plot(name) {
	const el = document.getElementById(name)
	const pane = PANES[name]
	const width = el.clientWidth
	const k = el.parentNode.offsetHeight / pane.h
	const x = i => Math.round(19 + i * (width - 38) / BARS) + .5
	const y = v => (v - pane.top) * k
	const out = []
	const tag = (t, attrs) => out.push('<' + t + ' ' + Object.entries(attrs).map(([a, v]) => a + '="' + v + '"').join(' ') + '/>')
	const pts = (data, from, to) => {
		const list = []
		for (let i = from; i <= to; i++) list.push(x(i) + ',' + y(data[i]))
		return list
	}
	return {
		x, y, width, tag, out,
		line(data, color, size = 1, from = 0, to = BARS, extra = {}) {
			const list = pts(data, from, to)
			if (extra.edge) list.unshift('0,' + y(extra.edge))
			tag('polyline', { points: list.join(' '), fill: 'none', stroke: color, 'stroke-width': size, 'stroke-dasharray': extra.dash || 'none' })
		},
		between(a, b, fill, from = 0, to = BARS, more = {}) {
			tag('polygon', { points: pts(a, from, to).concat(pts(b, from, to).reverse()).join(' '), fill, ...more })
		},
		rule(v, color, x1 = 0, x2 = width) {
			tag('path', { d: `M${x1} ${Math.floor(y(v)) + .5}H${x2}`, stroke: color })
		},
		bar(i, v, base, fill, stroke) {
			const a = Math.floor(y(Math.min(v, base))) + .5
			const b = Math.floor(y(Math.max(v, base))) + .5
			tag('rect', { x: x(i) - 9, y: a, width: 18, height: b - a, fill, stroke })
		},
		leader(from, to, color) {
			const c = x(CURSOR), s = c - 80
			tag('path', { d: `M${s} ${y(from)}C${s + 40} ${y(from)} ${c - 45} ${y(to)} ${c} ${y(to)}`, fill: 'none', stroke: color })
		},
		knob(v, color) {
			tag('circle', { cx: x(CURSOR), cy: y(v), r: 3, fill: '#f4f8ff', stroke: color, 'stroke-width': 1.3 })
		},
		cursor() {
			tag('path', { d: `M${x(CURSOR)} 0V${y(pane.top + pane.h)}`, stroke: '#ff8888' })
		},
		zone(i, j, a, b) {
			tag('rect', { x: x(i) + .5, y: y(a) + 1, width: x(j) - x(i) - 1, height: y(b) - y(a) - 2, fill: 'rgba(120,120,120,.32)', stroke: '#000', 'stroke-width': 2 })
		},
		done() {
			el.innerHTML = out.join('')
		}
	}
}

function drawPrice() {
	const p = plot('price')
	const close = candles.map(c => c[4] ? c[1] : c[2])
	p.between(mmp, mmpv, '#fafadc')
	p.tag('polygon', { points: `0,${p.y(203)} ${p.x(0)},${p.y(203.5)} ${p.x(0)},${p.y(217.5)} 0,${p.y(217.5)}`, fill: '#fafadc' })
	p.tag('polygon', { points: `0,${p.y(218)} 12,${p.y(218)} 0,${p.y(226)}`, fill: '#edc2d2' })
	p.between(mmp, close.map((c, i) => Math.max(c, mmp[i])), '#edc2d2', 0, 20)
	p.between(mmp, close.map((c, i) => Math.min(c, mmp[i])), 'url(#bull)', 19)
	p.cursor()
	p.line(maxLine, '#f00038', 1, 0, BARS, { edge: 138.5 })
	p.rule(278, '#000', p.x(6), p.x(BARS))
	p.tag('path', { d: `M${p.x(6) - 20} ${p.y(289)}L${p.x(6)} ${p.y(278.5)}`, stroke: '#000' })

	candles.forEach(([high, a, b, low, up], i) => {
		p.tag('path', { d: `M${p.x(i)} ${p.y(high)}V${p.y(low)}`, stroke: '#000' })
		const t = Math.floor(p.y(a)) + .5
		p.tag('rect', { x: p.x(i) - 9, y: t, width: 17, height: Math.floor(p.y(b)) + .5 - t, fill: up ? 'url(#up)' : 'url(#down)', stroke: '#000' })
	})
	// flat bars have no body to stroke
	candles.forEach(([, a, b], i) => { if (a === b) p.rule(a, '#000', p.x(i) - 9, p.x(i) + 9) })

	p.tag('path', { d: `M0 ${p.y(217.5)}H${p.x(0)}`, stroke: '#3838ff', 'stroke-width': 2 })
	p.line(mmp, '#f00', 2, 0, 19)
	p.line(mmp, '#3838ff', 2, 19, 20)
	p.line(mmp, '#f00', 2, 20, 22)
	p.line(mmp, '#3030f0', 2, 22)
	p.line(mmpv, '#f00000', 1, 0, 17, { edge: 203, dash: '20 9' })
	p.line(mmpv, '#30f010', 1, 17, 19, { dash: '20 9' })
	p.line(mmpv, '#f00000', 1, 19, 20, { dash: '20 9' })
	p.line(mmpv, '#30f010', 1, 20, 21)
	p.line(mmpv, '#f00000', 1, 21, 25, { dash: '20 9' })
	p.line(mmpv, '#30f010', 1, 25, BARS, { dash: '20 9' })

	p.zone(19, 21, 213, 279)
	p.tag('rect', { x: p.x(20), y: p.y(232), width: p.x(21) - p.x(20) - 2, height: 3, fill: '#ffb088', stroke: '#ff7030' })
	p.tag('path', { d: `M${p.x(20)} ${p.y(232)}v3M${p.x(20)} ${p.y(251)}v2M${p.x(20)} ${p.y(259)}v2`, stroke: '#5588ff', 'stroke-width': 2 })

	p.leader(125.5, 149.5, '#f00038')
	p.leader(146.5, 224.5, '#f00')
	p.leader(167.5, 242.5, '#f00')
	p.leader(223.5, 270.5, '#788c98')
	p.knob(149.5, '#f00038')
	p.knob(224.5, '#f00')
	p.knob(242.5, '#f00')
	p.knob(270.5, '#000')
	p.knob(278.5, '#000')
	p.done()
}

function drawVolume() {
	const p = plot('volume')
	volumes.forEach((v, i) => p.bar(i, Math.abs(v), 332, v > 0 ? 'url(#up)' : 'url(#down)', v > 0 ? '#0c8a10' : '#a02424'))
	p.cursor()
	p.leader(321.5, 325.5, '#dc6068')
	p.knob(325.5, '#dc6068')
	p.done()
}

function drawRsi() {
	const p = plot('rsi')
	// shade only what rises above the overbought level
	p.out.push(`<clipPath id="over"><rect width="${p.width}" height="${p.y(374.5)}"/></clipPath>`)
	p.between(rsiLine, rsiLine.map(() => 374.5), '#cba6b2', 25, BARS, { 'clip-path': 'url(#over)' })
	p.rule(374, '#2020d0')
	p.rule(416, '#2020d0')
	p.cursor()
	p.line(rsiLine, '#000', 1, 0, BARS, { edge: 397 })
	p.leader(406.5, 406.5, '#000')
	p.knob(406.5, '#000')
	p.done()
}

function drawKoncorde() {
	const p = plot('koncorde')
	verde.forEach((v, i) => p.bar(i, v, 516, 'url(#lime)', '#20b828'))
	azul.forEach((v, i) => { if (v !== 516) p.bar(i, v, 516, 'url(#cyan)', '#00b0b8') })
	p.line(azul, '#000080', 1, 0, BARS, { edge: 518.5 })
	p.line(verdeLine, '#087008', 1, 0, BARS, { edge: 490 })
	p.line(marron, '#400808', 1, 0, BARS, { edge: 492 })
	p.line(media, '#f00', 1, 0, BARS, { edge: 487 })
	p.rule(516, '#000', 0, p.x(BARS))
	p.zone(19, 21, 459, 544)
	p.tag('path', { d: `M${p.x(20)} ${p.y(538)}v5m0-2H${p.x(21)}M${p.x(20)} ${p.y(484)}v3`, stroke: '#5588ff', fill: 'none' })
	p.rule(463, 'rgba(235,80,90,.6)')
	p.cursor()
	p.leader(465.5, 502.5, '#f00')
	p.leader(486.5, 512.5, '#400808')
	p.leader(507.5, 512.5, '#c89860')
	p.leader(528.5, 516.5, '#000')
	p.leader(549.5, 516.5, '#000070')
	p.leader(557.5, 517, '#10b0b0')
	p.leader(557.5, 519.5, '#50dd58')
	p.knob(502.5, '#f00')
	p.knob(512.5, '#400808')
	p.knob(519.5, '#10a020')
	p.knob(516.5, '#000')
	// anchored text marker
	const m = p.x(CURSOR) - 39, n = Math.round(p.y(483)) + .5
	p.tag('rect', { x: m, y: n, width: 25, height: 25, fill: 'rgba(255,255,255,.3)', stroke: '#f8a0a8' })
	p.tag('rect', { x: m + 5, y: n + 5, width: 15, height: 15, fill: '#e4eefc', stroke: '#5588ff' })
	p.out.push(`<text class="glyph" x="${m + 12.5}" y="${n + 17}">T</text>`)
	p.done()
}

function drawCpm() {
	const p = plot('cpm')
	const zero = distance.map(() => 660.5)
	const floor = distance.map(() => 693.5)
	p.between(cpm, floor, 'url(#area)')
	p.tag('polygon', { points: `0,${p.y(672)} ${p.x(0)},${p.y(668)} ${p.x(0)},${p.y(693.5)} 0,${p.y(693.5)}`, fill: 'url(#area)' })
	p.between(distance, zero, 'url(#dist)')
	p.tag('polygon', { points: `0,${p.y(645)} ${p.x(0)},${p.y(654.5)} ${p.x(0)},${p.y(660.5)} 0,${p.y(660.5)}`, fill: 'url(#dist)' })
	cpm.forEach((v, i) => { if (v !== 660) p.bar(i, v, 660, v < 660 ? 'url(#cpmUp)' : 'url(#cpmDown)', v < 660 ? '#088a08' : '#c00038') })
	p.rule(660, '#000', 0, p.x(BARS))
	p.cursor()
	p.line(distance, '#000', 2, 0, BARS, { edge: 645 })
	p.zone(19, 21, 618, 678)
	p.zone(24, 25, 590, 621)
	p.tag('path', { d: `M${p.x(20)} ${p.y(628)}v4`, stroke: '#5588ff', 'stroke-width': 2 })
	p.leader(626.5, 626.5, '#000')
	p.leader(681.5, 674.5, '#f80070')
	p.knob(626.5, '#000')
	p.knob(660.5, '#000')
	p.knob(674.5, '#f80070')
	p.done()
}

function drawMacd() {
	const p = plot('macd')
	p.between(macdLine, signal, '#e88080', 0, 19)
	p.tag('polygon', { points: `0,${p.y(766)} ${p.x(0)},${p.y(766.5)} ${p.x(0)},${p.y(769.5)} 0,${p.y(770.5)}`, fill: '#e88080' })
	p.between(macdLine, signal, 'url(#macdUp)', 19)
	hist.forEach((v, i) => { if (v !== 761) p.bar(i, v, 761, v < 761 ? 'url(#up)' : 'url(#down)', v < 761 ? '#0c8a10' : '#a02424') })
	p.rule(761, '#2828d8')
	p.line(signal, '#dc6068', 1, 0, BARS, { edge: 766 })
	p.line(macdLine, '#2828d8', 1, 0, BARS, { edge: 770.5 })
	p.cursor()
	p.leader(732.5, 765.5, '#dc6068')
	p.leader(753.5, 776.5, '#dc6068')
	p.leader(774.5, 780.5, '#2828d8')
	p.knob(765.5, '#dc6068')
	p.knob(776.5, '#dc6068')
	p.knob(780.5, '#2828d8')
	p.done()
}

function draw() {
	drawPrice()
	drawVolume()
	drawRsi()
	drawKoncorde()
	drawCpm()
	drawMacd()
}

draw()
window.addEventListener('resize', draw)
```
